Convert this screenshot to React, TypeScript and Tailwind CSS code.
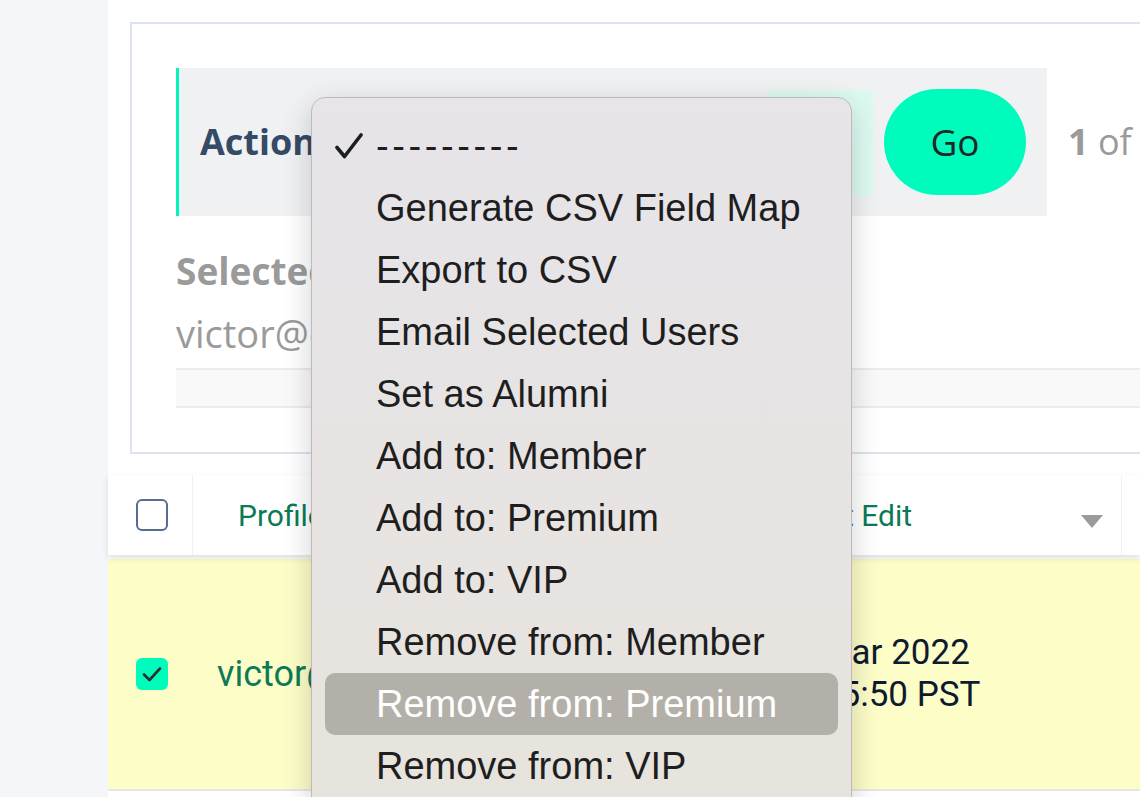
import React from 'react'

const menuItems = [
  '---------',
  'Generate CSV Field Map',
  'Export to CSV',
  'Email Selected Users',
  'Set as Alumni',
  'Add to: Member',
  'Add to: Premium',
  'Add to: VIP',
  'Remove from: Member',
  'Remove from: Premium',
  'Remove from: VIP',
]

function CheckGlyph() {
  return (
    <svg width="28" height="26" viewBox="0 0 28 26" fill="none">
      <path d="M2 14.5 L9.5 23.5 L26 2" stroke="#1e1e1e" strokeWidth="3.6" strokeLinecap="round" strokeLinejoin="round" />
    </svg>
  )
}

function ActionMenu() {
  return (
    <div className="absolute left-[311px] top-[97px] z-30 w-[541px] rounded-[14px] border border-[#bdbabe] bg-linear-to-b from-[#e7e4ea] to-[#e7e3dc] px-[13px] pt-[17px] pb-[20px] shadow-[0_8px_30px_rgba(0,0,0,0.18)] font-['Liberation_Sans',Arial,sans-serif]">
      {menuItems.map((item, i) => {
        const active = item === 'Remove from: Premium'
        return (
          <div
            key={item}
            className={
              active
                ? 'flex h-[62px] items-center rounded-[10px] bg-[#b3b0a9] text-[38px] text-white'
                : 'flex h-[62px] items-center rounded-[10px] text-[38px] text-[#1e1e1e]'
            }
          >
            <div className="flex w-[51px] shrink-0 justify-start pl-[10px]">
              {i === 0 && <CheckGlyph />}
            </div>
            <span className={i === 0 ? 'whitespace-nowrap tracking-[3.6px]' : 'whitespace-nowrap'}>{item}</span>
          </div>
        )
      })}
    </div>
  )
}

export default function App() {
  return (
    <div className="relative flex h-[797px] w-[1140px] overflow-hidden bg-white font-['Open_Sans',sans-serif]">
      {/* sidebar */}
      <div className="w-[108px] shrink-0 bg-[#f5f6fa]" />

      <div className="flex min-w-0 flex-1 flex-col bg-white">
        {/* actions box */}
        <div className="ml-[22px] mt-[22px] border-2 border-r-0 border-[#dde4ef] pb-[44px] pl-[44px] pt-[44px]">
          <div className="flex items-center">
            <div className="flex h-[148px] w-[871px] shrink-0 items-center border-l-[3px] border-[#00f5bb] bg-[#f0f1f3] pl-[21px] pr-[21px]">
              <span className="text-[36px] font-bold text-[#344a65]">Action:</span>
              <div className="ml-auto h-[105px] w-[105px] bg-[#ddfaf1]" />
              <button className="ml-[11px] flex h-[106px] w-[142px] items-center justify-center rounded-full bg-[#00fcbd] text-[37px] font-medium text-[#262626]">
                Go
              </button>
            </div>
            <div className="ml-[21px] whitespace-nowrap text-[36px] text-[#9a9a9a]">
              <span className="font-bold">1</span> of 1 selected
            </div>
          </div>

          <div className="mt-[30px] whitespace-nowrap text-[37px] font-bold leading-[49px] text-[#9a9a9a]">Selected users:</div>
          <div className="mt-[14px] whitespace-nowrap text-[38px] leading-[49px] text-[#9a9a9a]">victor@example.com</div>
          <div className="mt-[10px] h-[40px] border-y-2 border-[#ebebeb] bg-[#f9f9f9]" />
        </div>

        {/* table */}
        <div className="font-['Roboto',sans-serif]">
          <div className="relative z-10 mt-[21px] flex h-[80px] items-center bg-white shadow-[0_3px_6px_rgba(0,0,0,0.13)]">
            <div className="flex h-full w-[85px] shrink-0 items-center border-r border-[#f2f2f2] pl-[28px]">
              <div className="h-[32px] w-[32px] rounded-[6px] border-2 border-[#566d8c] bg-white" />
            </div>
            <div className="w-[603px] shrink-0 pl-[45px] text-[30px] text-[#0b7a55]">Profile</div>
            <div className="whitespace-nowrap text-[30px] text-[#0b7a55]">Last Edit</div>
            <div className="ml-auto mr-[18px] flex h-full items-center border-r border-[#f2f2f2] pr-[18px]">
              <svg width="22" height="13" viewBox="0 0 22 13" className="mt-[12px]">
                <path d="M0 0 H22 L11 13 Z" fill="#9b9b9b" />
              </svg>
            </div>
          </div>

          <div className="mt-[4px] flex h-[232px] items-center border-b-2 border-[#e6e6e6] bg-[#fdfdc8]">
            <div className="w-[85px] shrink-0 pl-[28px]">
              <div className="flex h-[32px] w-[32px] items-center justify-center rounded-[6px] bg-[#00fcbd]">
                <svg width="22" height="18" viewBox="0 0 22 18" fill="none">
                  <path d="M3 9.5 L8.5 15 L19 3.5" stroke="#2f2f2f" strokeWidth="2.6" strokeLinecap="round" strokeLinejoin="round" />
                </svg>
              </div>
            </div>
            <div className="w-[580px] shrink-0 pl-[24px] text-[36px] text-[#0b7a55]">victor@example.com</div>
            <div className="whitespace-nowrap text-[35px] leading-[42px] text-[#0f1a2e]">
              <div>24 Mar 2022</div>
              <div>11:45:50 PST</div>
            </div>
          </div>
        </div>
      </div>

      <ActionMenu />
    </div>
  )
}
